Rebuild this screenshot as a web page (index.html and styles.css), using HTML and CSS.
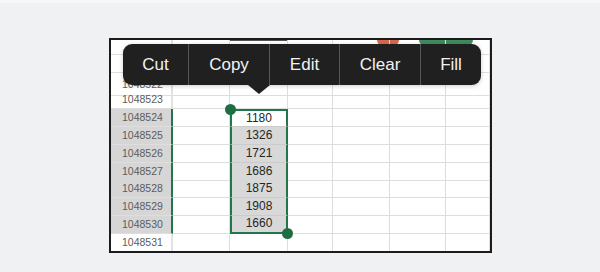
FILE: index.html
```html
<!DOCTYPE html>
<html lang="en">
<head>
    <meta charset="UTF-8">
    <title>Sheet selection menu</title>
    <link rel="stylesheet" href="styles.css">
</head>
<body>
    <div class="sheet">
        <!-- bits of the toolbar peeking out above the grid -->
        <div class="peek peek-line"></div>
        <div class="peek peek-red"></div>
        <div class="peek peek-green"></div>

        <div class="grid">
            <div class="row first"><div class="cell label"></div><div class="cell"></div><div class="cell"></div><div class="cell"></div><div class="cell"></div><div class="cell"></div><div class="cell"></div></div>
            <div class="row"><div class="cell label"></div><div class="cell"></div><div class="cell"></div><div class="cell"></div><div class="cell"></div><div class="cell"></div><div class="cell"></div></div>
            <div class="row"><div class="cell label low">1048522</div><div class="cell"></div><div class="cell"></div><div class="cell"></div><div class="cell"></div><div class="cell"></div><div class="cell"></div></div>
            <div class="row"><div class="cell label">1048523</div><div class="cell"></div><div class="cell"></div><div class="cell"></div><div class="cell"></div><div class="cell"></div><div class="cell"></div></div>
            <div class="row"><div class="cell label picked">1048524</div><div class="cell"></div><div class="cell sel sel-top active">1180</div><div class="cell"></div><div class="cell"></div><div class="cell"></div><div class="cell"></div></div>
            <div class="row"><div class="cell label picked">1048525</div><div class="cell"></div><div class="cell sel">1326</div><div class="cell"></div><div class="cell"></div><div class="cell"></div><div class="cell"></div></div>
            <div class="row"><div class="cell label picked">1048526</div><div class="cell"></div><div class="cell sel">1721</div><div class="cell"></div><div class="cell"></div><div class="cell"></div><div class="cell"></div></div>
            <div class="row"><div class="cell label picked">1048527</div><div class="cell"></div><div class="cell sel">1686</div><div class="cell"></div><div class="cell"></div><div class="cell"></div><div class="cell"></div></div>
            <div class="row"><div class="cell label picked">1048528</div><div class="cell"></div><div class="cell sel">1875</div><div class="cell"></div><div class="cell"></div><div class="cell"></div><div class="cell"></div></div>
            <div class="row"><div class="cell label picked">1048529</div><div class="cell"></div><div class="cell sel">1908</div><div class="cell"></div><div class="cell"></div><div class="cell"></div><div class="cell"></div></div>
            <div class="row"><div class="cell label picked">1048530</div><div class="cell"></div><div class="cell sel sel-bottom">1660</div><div class="cell"></div><div class="cell"></div><div class="cell"></div><div class="cell"></div></div>
            <div class="row"><div class="cell label">1048531</div><div class="cell"></div><div class="cell"></div><div class="cell"></div><div class="cell"></div><div class="cell"></div><div class="cell"></div></div>
        </div>

        <div class="menu">
            <span class="menu-item w-cut">Cut</span>
            <span class="menu-item w-copy">Copy</span>
            <span class="menu-item w-edit">Edit</span>
            <span class="menu-item w-clear">Clear</span>
            <span class="menu-item w-fill">Fill</span>
        </div>
    </div>
</body>
</html>
```

FILE: styles.css
```css
body {
    margin: 0;
    background-color: #f0f1f3;
    border-top: 3px solid #f7f7f8;
    font-family: "Liberation Sans", Arial, sans-serif;
}

.sheet {
    position: relative;
    width: 379px;
    height: 211px;
    margin: 35px 0 0 109px;
    border: 2px solid #1c1c1c;
    background-color: #fff;
    overflow: hidden;
}

/* toolbar shapes showing just above the menu */
.peek {
    position: absolute;
    top: 0;
}

.peek-line {
    left: 119px;
    width: 57px;
    height: 1px;
    background-color: #555;
}

.peek-red {
    left: 266px;
    width: 22px;
    height: 6px;
    background-color: #d2694c;
    border-radius: 0 0 11px 11px;
}

.peek-green {
    left: 308px;
    width: 54px;
    height: 6px;
    background-color: #3f8a5f;
    border-radius: 0 0 8px 8px;
}

.row {
    display: grid;
    grid-template-columns: 62px 57px 58px 45px 57px 56px 44px;
    height: 17.86px;
}

.row.first {
    height: 15.4px;
}

.cell {
    box-sizing: border-box;
    position: relative;
    border-right: 1px solid #dedede;
    border-bottom: 1px solid #dedede;
    font-size: 12px;
    color: #262626;
    text-align: center;
    line-height: 17px;
}

.row.first .cell {
    line-height: 15px;
}

.label {
    padding-left: 11px;
    text-align: left;
    font-size: 10.5px;
    color: #5c5c5c;
    border-right: 2px solid #e2e2e2;
}

.label.low {
    line-height: 22px;
}

.label.picked {
    background-color: #d6d6d6;
    border-right-color: #23754a;
}

.sel {
    background-color: #d8d8d8;
    border-left: 2px solid #23754a;
    border-right: 2px solid #23754a;
    border-bottom-color: #cbcbcb;
}

.sel.active {
    background-color: #fff;
}

.sel-top {
    border-top: 2px solid #23754a;
    line-height: 15px;
}

.sel-bottom {
    border-bottom: 2px solid #23754a;
    line-height: 15px;
}

/* drag handles */
.sel-top::before,
.sel-bottom::after {
    content: "";
    position: absolute;
    width: 11px;
    height: 11px;
    border-radius: 50%;
    background-color: #1f6e43;
    z-index: 2;
}

.sel-top::before {
    left: -7px;
    top: -7px;
}

.sel-bottom::after {
    right: -7px;
    bottom: -7px;
}

.menu {
    position: absolute;
    left: 12px;
    top: 4px;
    display: flex;
    height: 41px;
    background-color: #202020;
    border-radius: 9px;
    z-index: 3;
    box-shadow: 0 1px 4px rgba(0, 0, 0, 0.2);
}

/* little pointer under Copy */
.menu::after {
    content: "";
    position: absolute;
    left: 125px;
    top: 41px;
    border-left: 11px solid transparent;
    border-right: 11px solid transparent;
    border-top: 9px solid #202020;
}

.menu-item {
    display: flex;
    align-items: center;
    justify-content: center;
    color: #f2f2f2;
    font-size: 17px;
    border-left: 1px solid #565656;
}

.menu-item:first-child {
    border-left: none;
}

.w-cut { width: 65px; }
.w-copy { width: 80px; }
.w-edit { width: 69px; }
.w-clear { width: 80px; }
.w-fill { width: 60px; }
```
